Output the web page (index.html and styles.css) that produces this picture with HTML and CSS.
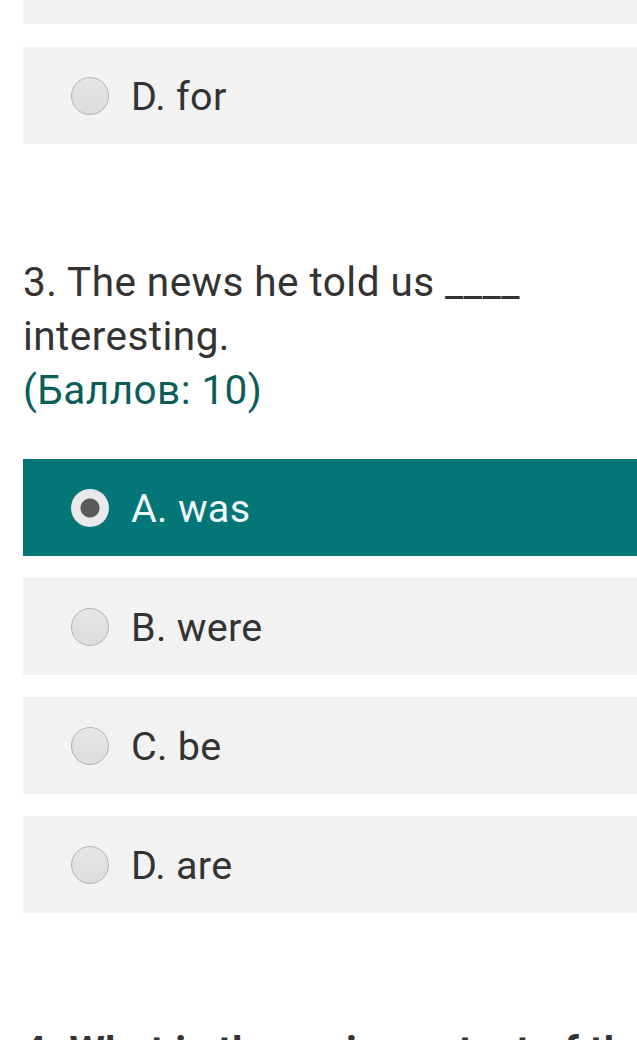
FILE: index.html
```html
<!DOCTYPE html>
<html lang="ru">
<head>
<meta charset="utf-8">
<link rel="stylesheet" href="styles.css">
</head>
<body>
<div class="page">
  <div class="option option-cut"></div>
  <div class="option">
    <span class="radio"></span><span class="label">D. for</span>
  </div>

  <div class="question">
    <div class="qtext">3. The news he told us ____ interesting.</div>
    <div class="points">(Баллов: 10)</div>
  </div>

  <div class="options">
    <div class="option selected">
      <span class="radio"></span><span class="label">A. was</span>
    </div>
    <div class="option">
      <span class="radio"></span><span class="label">B. were</span>
    </div>
    <div class="option">
      <span class="radio"></span><span class="label">C. be</span>
    </div>
    <div class="option">
      <span class="radio"></span><span class="label">D. are</span>
    </div>
  </div>

  <div class="question next">
    <div class="qtext">4. What is the main context of the text?</div>
  </div>
</div>
</body>
</html>
```

FILE: styles.css
```css
html, body {
  margin: 0;
  padding: 0;
  background: #ffffff;
  overflow: hidden;
}

.page {
  padding-left: 23px;
  font-family: Roboto, "Noto Sans", sans-serif;
  color: #333333;
  display: flex;
  flex-direction: column;
}

.option {
  background: #f2f2f2;
  height: 97px;
  display: flex;
  align-items: center;
  padding-left: 48px;
  font-size: 39.5px;
  letter-spacing: 0.3px;
}

.option-cut {
  height: 24px;
  margin-bottom: 23px;
}

.options {
  display: flex;
  flex-direction: column;
  gap: 22px;
}

.radio {
  width: 36px;
  height: 36px;
  border-radius: 50%;
  border: 1px solid #b4b4b4;
  background: linear-gradient(#e6e6e6, #dcdcdc);
  flex: none;
  margin-right: 22px;
  box-sizing: content-box;
}

.label {
  line-height: 1;
  padding-top: 2px;
}

.option.selected {
  background: #047677;
  color: #f0fbfb;
}

.option.selected .radio {
  border: none;
  width: 38px;
  height: 38px;
  background: radial-gradient(circle, #5b5b5b 0 9px, #e9e9e9 10px);
}

.question {
  margin-top: 111px;
  margin-bottom: 42px;
  font-size: 40.5px;
  letter-spacing: 0.45px;
  line-height: 54px;
  padding-right: 90px;
}

.points {
  color: #0b5d5a;
}

.question.next {
  margin-top: 111px;
  font-weight: bold;
  white-space: nowrap;
}
```
